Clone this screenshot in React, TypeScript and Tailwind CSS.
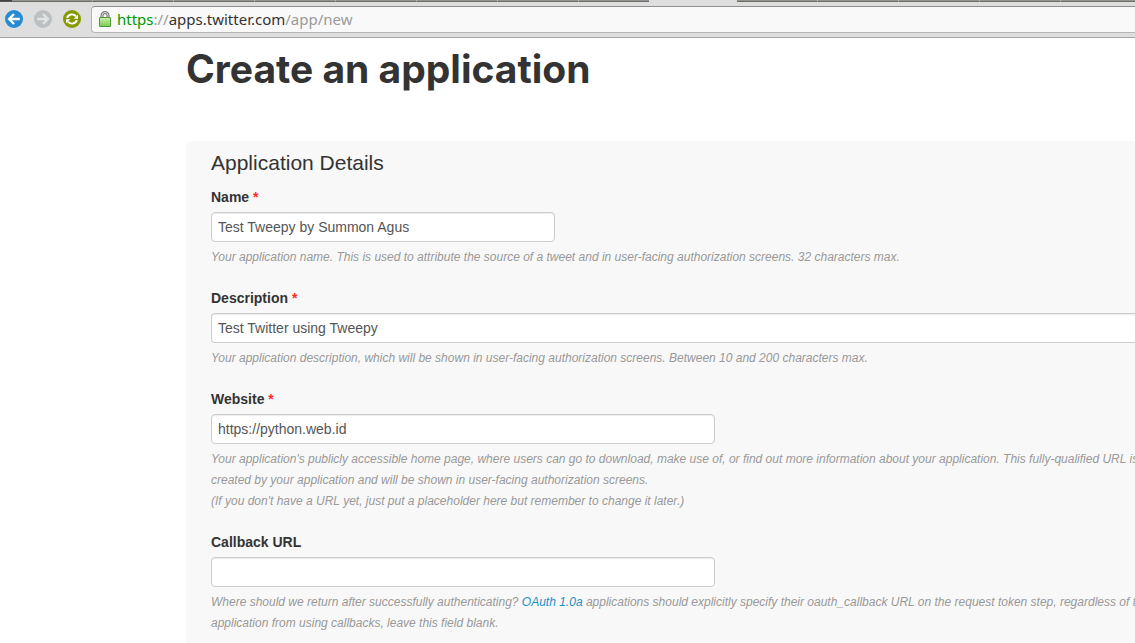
import type { ReactNode } from "react";

function BackIcon() {
  return (
    <svg width="18" height="18" viewBox="0 0 18 18" aria-hidden="true">
      <circle cx="9" cy="9" r="9" fill="#268bd2" />
      <path d="M9 4 4.2 9l4.8 5M4.6 9H14.8" fill="none" stroke="#fff" strokeWidth="2.4" />
    </svg>
  );
}

function ForwardIcon() {
  return (
    <svg width="18" height="18" viewBox="0 0 18 18" aria-hidden="true">
      <circle cx="9" cy="9" r="9" fill="#bcc0c2" />
      <path d="M9 4 13.8 9l-4.8 5M13.4 9H3.2" fill="none" stroke="#e2e3e3" strokeWidth="2.4" />
    </svg>
  );
}

function ReloadIcon() {
  return (
    <svg width="18" height="18" viewBox="0 0 18 18" aria-hidden="true">
      <circle cx="9" cy="9" r="9" fill="#859900" />
      <path d="M4 7.8A5.2 5.2 0 0 1 13 6.4M14 10.2A5.2 5.2 0 0 1 5 11.6" fill="none" stroke="#fff" strokeWidth="1.9" />
      <path d="M15 4.8v4h-4.2zM3 13.2v-4h4.2z" fill="#fff" />
    </svg>
  );
}

function LockIcon() {
  return (
    <svg width="12" height="16" viewBox="0 0 12 16" aria-hidden="true">
      <defs>
        <linearGradient id="lock" x1="0" y1="0" x2="0" y2="1">
          <stop offset="0" stopColor="#c9efaa" />
          <stop offset="1" stopColor="#7ccb50" />
        </linearGradient>
      </defs>
      <path d="M3 7V4.5a3 3 0 0 1 6 0V7" fill="none" stroke="#777" strokeWidth="3" />
      <path d="M3 7V4.5a3 3 0 0 1 6 0V7" fill="none" stroke="#ddd" strokeWidth="1" />
      <rect x="0.5" y="6.5" width="11" height="9" rx="0.5" fill="url(#lock)" stroke="#4c9a35" />
    </svg>
  );
}

const tabClass = "w-[81px] border-r border-b border-r-[#b4b4b0] border-b-[#6b6b68]";

function Toolbar() {
  return (
    <header className="border-b border-[#a5a5a5] bg-[#dedede]">
      <div className="flex h-[2px] overflow-hidden bg-[#949490]">
        <div className="w-3 shrink-0 border-b border-b-[#555] bg-[#444]" />
        <div className={tabClass} />
        <div className={tabClass} />
        <div className={tabClass} />
        <div className={tabClass} />
        <div className={tabClass} />
        <div className={tabClass} />
        <div className={tabClass} />
        <div className="w-[70px] border-b border-b-[#6b6b68]" />
        <div className="w-[88px] bg-[#dedede]" />
        <div className={tabClass} />
        <div className={tabClass} />
        <div className={tabClass} />
        <div className={tabClass} />
        <div className="flex-1 border-b border-b-[#6b6b68]" />
      </div>
      <div className="flex items-center py-1 pl-[5px]">
        <nav className="flex gap-[11px] pb-[2px]" aria-label="Browser">
          <button type="button" aria-label="Back"><BackIcon /></button>
          <button type="button" aria-label="Forward" disabled><ForwardIcon /></button>
          <button type="button" aria-label="Reload"><ReloadIcon /></button>
        </nav>
        <div className="ml-[10px] flex h-[27px] flex-1 items-center gap-[6px] rounded-l-[4px] border border-r-0 border-[#b5b5b5] border-t-[#8f8f8f] bg-[#f9f9f9] pb-[2px] pl-[7px]">
          <LockIcon />
          <div
            role="textbox"
            aria-label="Address"
            tabIndex={0}
            className="font-['Noto_Sans',sans-serif] text-[15px] leading-5 whitespace-nowrap text-[#999]"
          >
            <span className="text-[#009a00]">https</span>://<span className="text-[#333]">apps.twitter.com</span>/app/new
          </div>
        </div>
      </div>
    </header>
  );
}

type FieldProps = {
  id: string;
  label: string;
  value?: string;
  required?: boolean;
  inputClass: string;
  children: ReactNode;
};

function Field({ id, label, value = "", required = false, inputClass, children }: FieldProps) {
  return (
    <div className="mb-5">
      <label htmlFor={id} className="mb-[5px] block text-sm leading-5 font-bold text-[#333]">
        {label}
        {required && <span className="text-[#ff2a2a]"> *</span>}
      </label>
      <input
        id={id}
        type="text"
        defaultValue={value}
        required={required}
        aria-describedby={`${id}-help`}
        className={`block h-[30px] border border-[#ccc] bg-white px-[6px] text-sm text-[#555] shadow-[inset_0_1px_1px_rgba(0,0,0,0.075)] outline-none ${inputClass}`}
      />
      <p id={`${id}-help`} className="mt-[5px] text-xs leading-[21px] whitespace-nowrap text-[#999] italic">
        {children}
      </p>
    </div>
  );
}

export default function App() {
  return (
    <div className="h-screen overflow-hidden bg-white font-['Liberation_Sans',Arial,sans-serif]">
      <Toolbar />
      <main className="pl-[186px]">
        <h1 className="mb-12 pt-[7px] font-['Inter',sans-serif] text-[39px] leading-[48px] font-bold whitespace-nowrap text-[#333]">
          Create an application
        </h1>
        <form className="overflow-hidden rounded-tl-md bg-[#f8f8f8] pt-2 pl-[25px]">
          <h2 className="mb-[10px] text-[21px] leading-7 text-[#333]">Application Details</h2>
          <Field id="name" label="Name" required value="Test Tweepy by Summon Agus" inputClass="w-[344px] rounded-[4px]">
            Your application name. This is used to attribute the source of a tweet and in user-facing authorization screens. 32 characters max.
          </Field>
          <Field id="description" label="Description" required value="Test Twitter using Tweepy" inputClass="w-full rounded-l-[4px] border-r-0">
            Your application description, which will be shown in user-facing authorization screens. Between 10 and 200 characters max.
          </Field>
          <Field id="website" label="Website" required value="https://python.web.id" inputClass="w-[504px] rounded-[4px]">
            Your application's publicly accessible home page, where users can go to download, make use of, or find out more information about your application. This fully-qualified URL is
            <br />
            created by your application and will be shown in user-facing authorization screens.
            <br />
            (If you don't have a URL yet, just put a placeholder here but remember to change it later.)
          </Field>
          <Field id="callback" label="Callback URL" inputClass="w-[504px] rounded-[4px]">
            Where should we return after successfully authenticating?{" "}
            <a href="#oauth" className="text-[#1b8fc6]">OAuth 1.0a</a> applications should explicitly specify their oauth_callback URL on the request token step, regardless of the
            <br />
            application from using callbacks, leave this field blank.
          </Field>
        </form>
      </main>
    </div>
  );
}
